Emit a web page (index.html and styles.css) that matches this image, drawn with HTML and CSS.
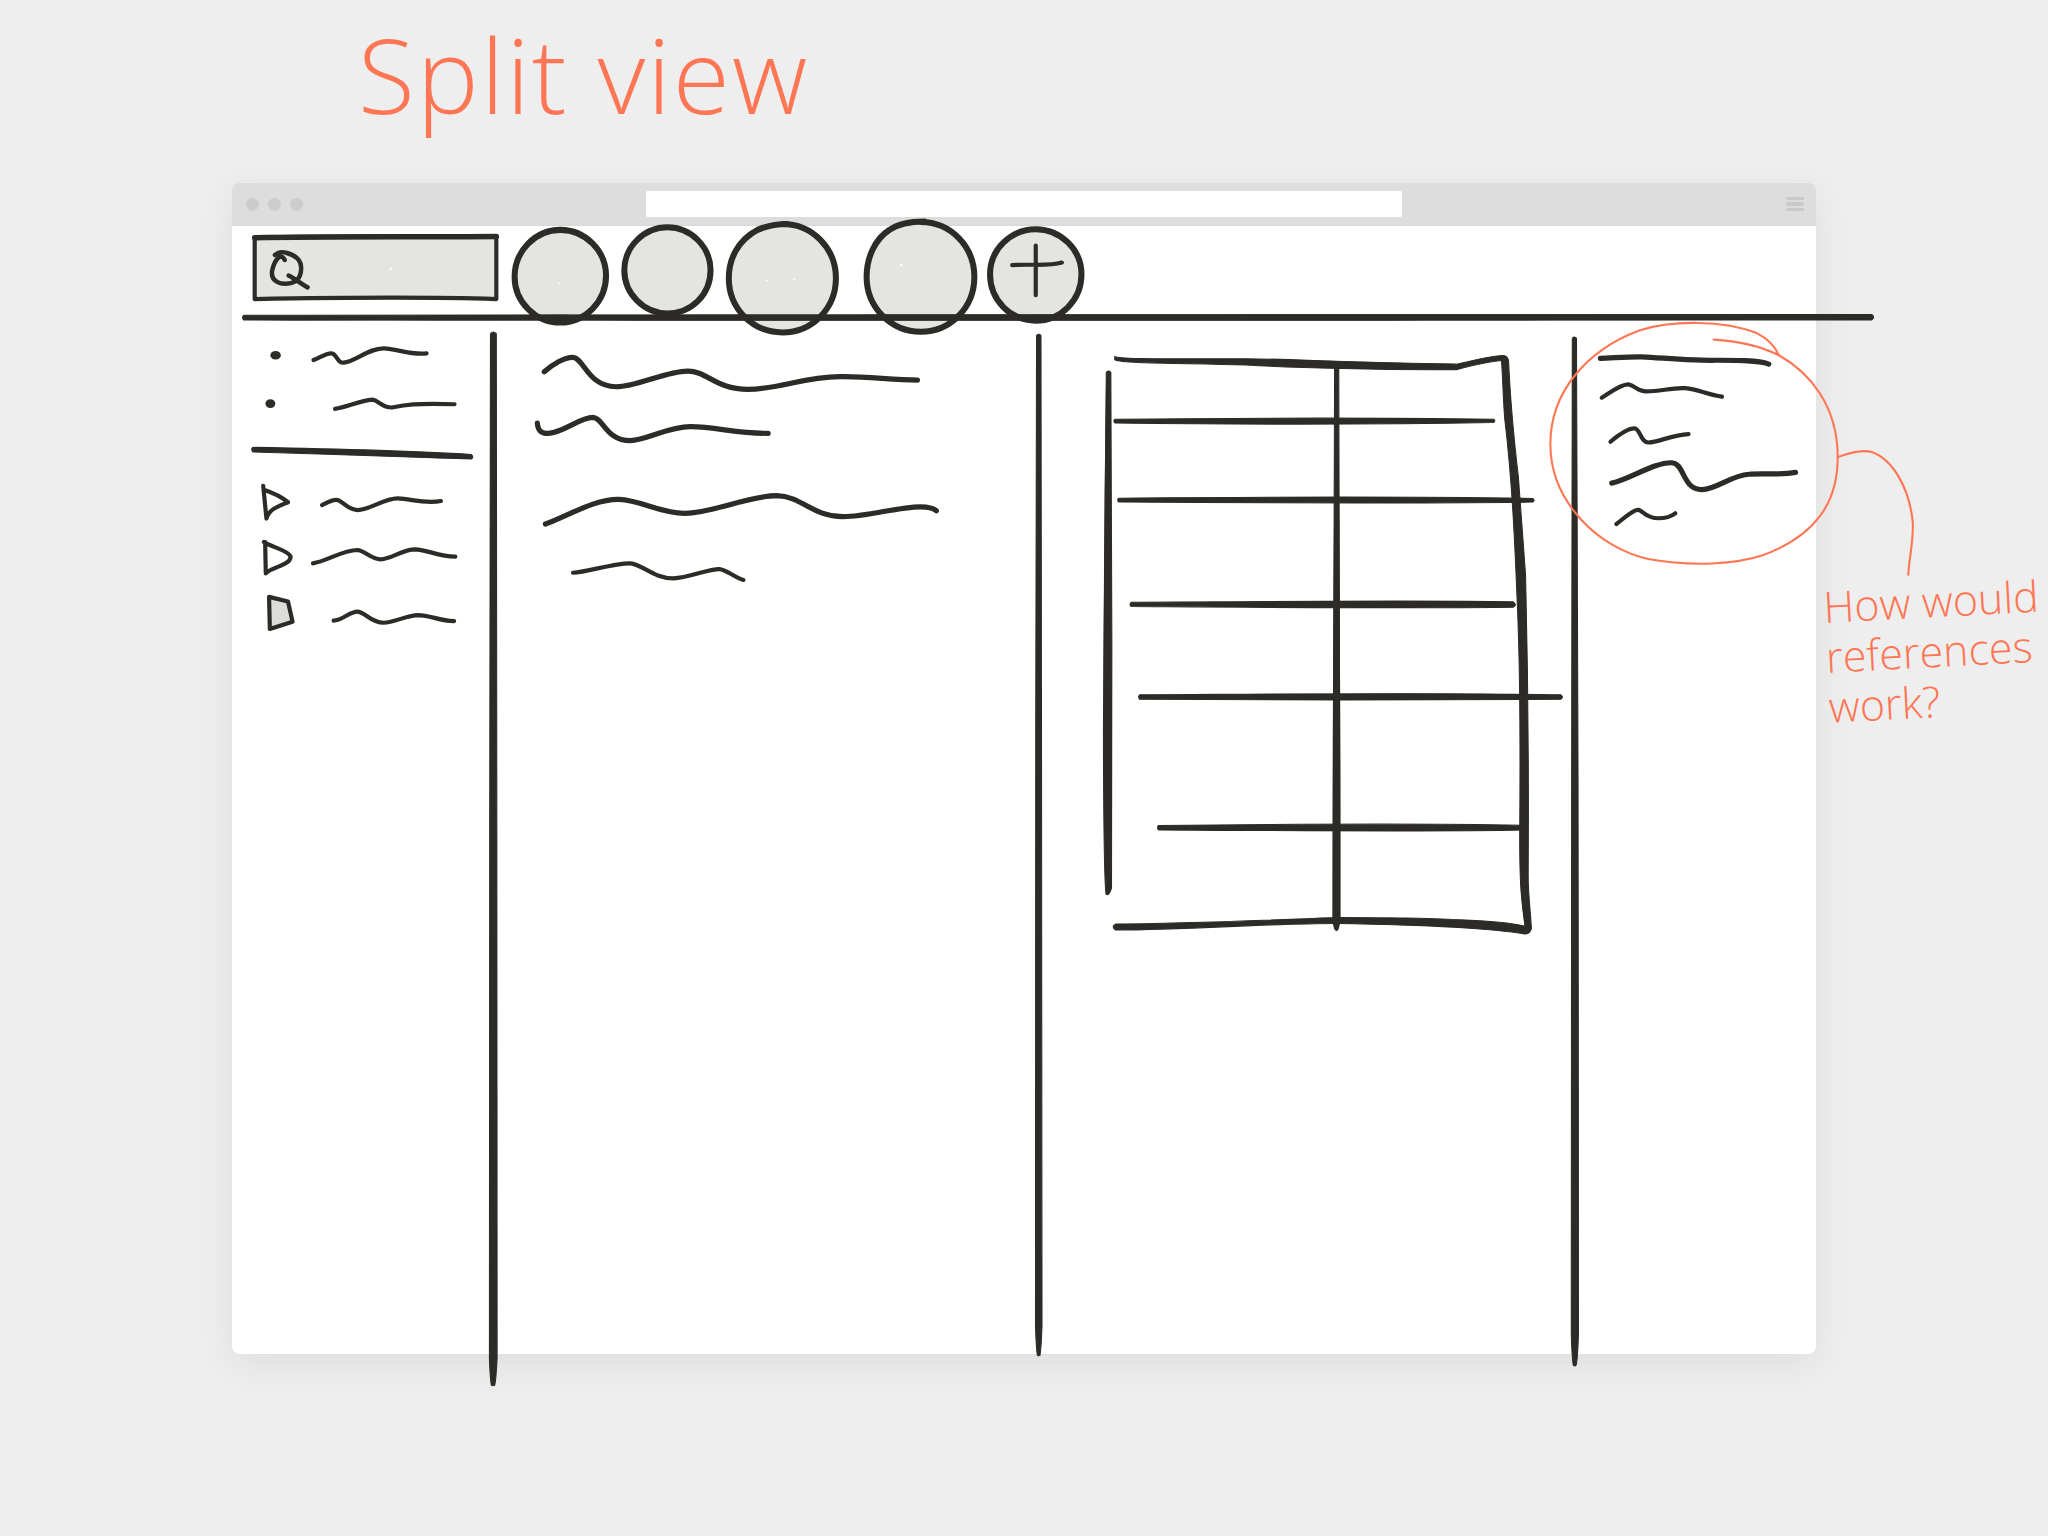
FILE: index.html
```html
<!DOCTYPE html>
<html lang="en">
<head>
<meta charset="utf-8">
<title>Split view sketch</title>
<link rel="stylesheet" href="styles.css">
</head>
<body>
<main class="canvas">
  <section class="window">
    <header class="titlebar">
      <div class="dots"><span class="dot"></span><span class="dot"></span><span class="dot"></span></div>
      <div class="url"></div>
      <div class="menu"><span></span><span></span><span></span></div>
    </header>
    <div class="page"></div>
  </section>

  <svg class="sketch" viewBox="0 0 1568 1176" aria-hidden="true">
    <!-- search box -->
    <path class="box" d="M195 182 C250 180.500 320 181 380 181 L380 229 C320 227 250 228 195 229 Z"/>
    <path class="ink-thick" d="M195 182 C250 181 320 181.500 380 181"/>
    <path class="ink-q" d="M210.500 195.200 C213 193 216 192.600 219 193.500 C225 195 230 198 230.500 204 C231 209 229 214 226 215.500 C222 217.500 216 218 212.500 216 C208.500 214 207.500 211 208.500 206.500 C209.500 202 212 198 214 196.500 C215.500 196 217 197 218 199 M221 211 C226 213 231 218 235.500 220"/>

    <!-- round tabs -->
    <path class="oval" d="M429 176 C448 176 464 192 464 211 C464 231 448 247 429 247 C410 247 394 231 394 212 C394 192 410 176 429 176"/>
    <path class="oval" d="M511 174 C529 174 544 189 544 207 C544 226 529 240 511 240 C493 240 478 225 478 207 C478 189 493 174 511 174"/>
    <path class="oval" d="M599 171.500 C622 171.500 640 190 640 213 C640 236 622 254.500 599 254.500 C576 254.500 558 236 558 213 C558 198 565 184 580 176 C587 173 593 171.500 603 171.500"/>
    <path class="oval" d="M705 170 C728 170 746 189 746 212 C746 235 728 254 705 254 C682 254 663.500 235 663.500 212 C663.500 197 670 183 681 176 C688 171 696 169.500 708 169.500"/>
    <path class="oval" d="M793 175.500 C812 175.500 828 191 828 210 C828 230 812 245.500 793 245.500 C774 245.500 758 230 758 210 C758 191 774 175.500 793 175.500"/>
    <path class="ink" d="M793 188 L793 226 M775 203 C790 202 803 204 813 201"/>
    <g class="speck">
      <circle cx="299" cy="206" r="1"/><circle cx="428" cy="217" r="0.8"/><circle cx="587" cy="215" r="0.8"/>
      <circle cx="608" cy="214" r="0.8"/><circle cx="690" cy="203" r="1"/>
    </g>

    <!-- header rule -->
    <path class="solid" d="M186.500 241.400 C500 241 800 240.200 1433 240.800 Q1436 242.800 1433 245 C800 245.800 500 245.800 186.500 245 Q185 243.200 186.500 241.400 Z"/>

    <!-- pane dividers -->
    <path class="solid" d="M375.500 255.500 Q377.600 253 380 255.500 C380.300 500 380.600 800 380.600 1040 Q379.800 1056 378.800 1060.500 Q377.500 1061.500 376.200 1060.500 Q375.300 1056 374.700 1040 C374.700 800 375 500 375.500 255.500 Z"/>
    <path class="solid" d="M793.600 257 Q795.300 255 797 257 C797.500 500 797.500 800 797.800 1015 Q797.200 1032 796.300 1037.500 Q795.200 1038.500 794.200 1037.500 Q793.300 1032 792.800 1015 C792.500 800 793 500 793.600 257 Z"/>
    <path class="solid" d="M1203.800 259 Q1205.500 257 1207 259 C1208 500 1209 800 1208.500 1022 Q1207.900 1040 1206.800 1045 Q1205.600 1046.500 1204.500 1045 Q1203.600 1040 1203 1022 C1203 800 1203.300 500 1203.800 259 Z"/>

    <!-- sidebar -->
    <ellipse class="blot" cx="211" cy="272" rx="4" ry="3.300"/>
    <ellipse class="blot" cx="207" cy="309" rx="3.800" ry="3.300"/>
    <path class="ink" d="M240 275.700 C245 274 250 270 254 270.600 C258 271 258 278 263 277.700 C272 277 282 266.500 294 266.700 C304 267 314 272 326.600 270.600"/>
    <path class="ink" d="M256.500 313 C265 312 275 307 285 306 C290 306.500 292 312 300 312 C310 310 318 308.500 348 309.500"/>
    <path class="solid" d="M193.500 342.500 C250 343.500 320 345.500 361 348 Q363 350 361 351.500 C320 350.500 250 347.500 193.500 346 Q192 344 193.500 342.500 Z"/>
    <path class="ink" d="M201.500 372 L204 397 C206 390 212 388 220.500 384.500 C215 380 208 377 202 375"/>
    <path class="ink" d="M203 415 L203.500 439 C208 434 222.500 433 222.500 426 C220 421 208 419 202 415"/>
    <path class="ink shade" d="M206 457 L220.500 460.500 L224 476 L206.600 481.500 Z"/>
    <path class="ink" d="M246.600 386.700 C250 385 255 382 258.500 382.800 C263 384 266 390.500 274 390.500 C284 390 294 381.500 304.600 381.600 C315 382 325 386 337.600 383.600"/>
    <path class="ink" d="M239.600 431.300 C250 430 262 421 274 421.100 C280 422 284 428.300 291.500 428.300 C300 428 308 420.600 317.800 420.600 C328 421 335 426 348.600 426.200"/>
    <path class="ink" d="M255.400 475.200 C262 475 268 468 274 468.300 C280 469 284 476.800 293.700 476.800 C302 476.500 312 471 320 470.900 C330 471 336 475.500 347.700 475.500"/>

    <!-- document pane -->
    <path class="ink-mid" d="M416.700 284.600 C423 279 432 273.500 438.700 273.600 C447 274 450 296 471.700 296.100 C488 296 510 284 526.600 284.100 C541 284 548 298 572.700 298.100 C596 298 615 288.600 643 288.400 C665 288 682 291 702.400 291"/>
    <path class="ink-mid" d="M411.400 324 C412 331 416 332 420 331.800 C432 331 444 319.500 454 319.600 C462 320 464 337.400 482.600 337.400 C495 337 512 326.500 528.800 326.700 C548 327 565 331.800 588.100 331.800"/>
    <path class="ink-mid" d="M417.600 401.200 C435 395 455 382 473.900 382.300 C491 383 505 393 524.400 393 C545 393 573 379.500 594.700 379.500 C614 380 622 395.500 645.300 395.600 C665 395.500 687 388 704.600 388 C710 388 714 388.500 716.900 391"/>
    <path class="ink" d="M438.700 438.500 C450 438 470 431 482.600 431.300 C492 432 500 442.800 515.600 442.800 C527 442.500 542 435.600 550.800 435.700 C556 436 562 442 569.200 444"/>

    <!-- table -->
    <path class="solid" d="M853.500 272.800 C856 275 880 274.700 954 274.600 C990 275 1023 277 1115 278.800 C1125 277 1135 273.500 1150 272.200 Q1154 272 1155 276 C1156 300 1159 335 1162.500 365 L1168 440 C1170 520 1170.500 600 1170 670 C1170 685 1172 700 1172.500 711 Q1171 715.500 1167.500 715 C1150 712 1110 708.500 1023 707 C970 707 910 712 854 712 Q850.500 709.500 854 707.500 C910 707 970 704.500 1023 702.500 C1105 702.500 1150 705 1167 709 L1167.500 708.500 C1165 690 1163.500 680 1163.500 640 C1164 580 1164 520 1162 470 C1160 420 1158 370 1152 320 C1150.500 300 1150.500 285 1149.500 276 C1135 277.500 1125 280.500 1115 283 C1060 283.500 990 281.500 954 279.500 C900 278 860 278.500 853.500 275.500 Z"/>
    <path class="solid" d="M847 285 Q848.700 283 850.500 285 C850.800 400 852 560 851 680 Q849 686.500 846.800 684.500 Q845 670 844.800 560 C845 430 846 340 847 285 Z"/>
    <path class="solid" d="M1021.800 281 L1025 281 C1025 400 1026.800 550 1026 702 Q1025.300 712.500 1023.300 712.500 Q1021 712.500 1020.500 702 C1019.800 550 1021.800 400 1021.800 281 Z"/>
    <path class="solid" d="M853.600 321 C950 320 1060 319.800 1143.500 321 Q1145.500 322.300 1143.500 323.500 C1060 325 950 325 853.600 323.800 Q852 322.400 853.600 321 Z"/>
    <path class="solid" d="M856.500 381.400 C950 380.600 1080 380 1173.500 381.600 Q1175.500 383 1173.500 384.400 C1080 385.500 950 385 856.500 384.400 Q855 383 856.500 381.400 Z"/>
    <path class="solid" d="M866 461.200 C960 460.500 1090 459.500 1158.500 460.800 Q1162 463 1158.500 465 C1090 466 960 465 866 464.400 Q864.500 463 866 461.200 Z"/>
    <path class="solid" d="M872.500 532 C970 531.500 1100 530 1195 532 Q1197.500 533.600 1195 535.400 C1100 536.400 970 536 872.500 535.400 Q871 533.700 872.500 532 Z"/>
    <path class="solid" d="M887 632 C980 631 1100 630.500 1165 631.800 L1166 635.500 C1100 637 980 636 887 635.400 Q885.500 633.700 887 632 Z"/>

    <!-- references pane -->
    <path class="ink-mid" d="M1225.300 274.400 C1236 274 1247 273 1257 273.200 C1272 274 1288 275.500 1303 275.800 C1320 276 1344 275 1354.200 278.800"/>
    <path class="ink" d="M1226.300 304.500 C1232 301 1241 294 1246.800 294.300 C1252 295 1253 299.500 1259.600 299.600 C1270 300 1280 296.500 1290.300 297.200 C1300 298 1308 302.500 1318.400 303.700"/>
    <path class="ink" d="M1233 338.200 C1238 334 1246 327.500 1251.900 328 C1256 329 1256 338.500 1262.100 338.800 C1270 338.500 1280 333 1292.800 332.400"/>
    <path class="ink-mid" d="M1234 369.900 C1248 367 1266 354 1280 354.300 C1290 355 1288 374.900 1303 374.900 C1315 374.500 1325 364 1338.900 363.100 C1350 362 1362 364 1374.700 361.700"/>
    <path class="ink" d="M1237.600 401.200 C1242 398 1250 390 1254.500 390.400 C1258 391 1260 396.800 1269.800 396.800 C1275 396.800 1280 395 1282.600 393"/>

    <!-- annotation -->
    <path class="note" d="M1312 260 C1330 261 1348 265 1362 272 C1385 285 1407 310 1407 350 C1407 385 1390 410 1350 425 C1330 432 1295 434 1262 428 C1225 420 1187 385 1187 340 C1187 300 1215 268 1255 253 C1280 245 1320 245 1345 255 C1353 259 1359 265 1362 272"/>
    <path class="note" d="M1407 350 C1415 347 1425 344 1433 346 C1450 352 1462 375 1464.500 400 C1465 415 1462 425 1461 440"/>
  </svg>

  <h1 class="title">Split view</h1>
  <p class="question">How would<br>references<br>work?</p>
</main>
</body>
</html>
```

FILE: styles.css
```css
* { box-sizing: border-box; }
html, body { margin: 0; padding: 0; background: #eeeeee; }

.canvas {
  position: relative;
  width: 2048px;
  height: 1536px;
  padding: 183px 232px 0;
  overflow: hidden;
  background: #eeeeee;
}

.window {
  display: flex;
  flex-direction: column;
  height: 1171px;
  border-radius: 8px;
  overflow: hidden;
  box-shadow: 0 10px 40px rgba(0, 0, 0, 0.07);
}

.titlebar {
  display: grid;
  grid-template-columns: 1fr 756px 1fr;
  align-items: center;
  height: 43px;
  padding: 0 12px 0 12px;
  background: #dddddd;
  border-bottom: 1px solid #d8d8d8;
}

.dots { display: flex; gap: 9px; padding-left: 2px; }
.dot { width: 13px; height: 13px; border-radius: 50%; background: #cccccc; }

.url {
  height: 26px;
  border-radius: 2px;
  background: #ffffff;
}

.menu {
  display: flex;
  flex-direction: column;
  gap: 2px;
  justify-self: end;
  width: 18px;
}
.menu span { height: 3.500px; border-radius: 2px; background: #c9c9c9; }

.page { flex: 1; background: #ffffff; }

.sketch {
  position: absolute;
  top: 0;
  left: 0;
  width: 2048px;
  height: 1536px;
  overflow: visible;
}

.sketch path { stroke-linecap: round; stroke-linejoin: round; }

.box { fill: #e4e4e2; stroke: #2c2b27; stroke-width: 3.200; }
.oval { fill: #e4e4e2; stroke: #2c2b27; stroke-width: 4.600; }
.ink { fill: none; stroke: #2c2b27; stroke-width: 3.200; }
.ink.shade { fill: #dcdcda; }
.ink-q { fill: none; stroke: #2c2b27; stroke-width: 3.400; }
.ink-mid { fill: none; stroke: #2c2b27; stroke-width: 4; }
.ink-thick { fill: none; stroke: #2c2b27; stroke-width: 4.200; }
.solid { fill: #2c2b27; stroke: #2c2b27; stroke-width: 0.800; }
.blot { fill: #2c2b27; }
.speck circle { fill: #ffffff; }
.note { fill: none; stroke: #ff7654; stroke-width: 1.600; }

.title, .question {
  position: absolute;
  margin: 0;
  font-family: "Open Sans", "Liberation Sans", sans-serif;
  font-weight: 300;
  color: #ff7654;
}

.title {
  left: 358px;
  top: 4px;
  font-size: 104px;
  line-height: 140px;
  letter-spacing: 2px;
  white-space: nowrap;
}

.question {
  left: 1822px;
  top: 582px;
  font-size: 43px;
  line-height: 50px;
  transform: rotate(-3deg);
  transform-origin: left top;
  white-space: nowrap;
}
```
